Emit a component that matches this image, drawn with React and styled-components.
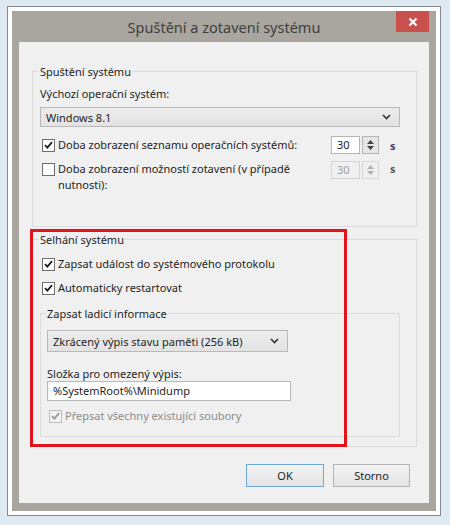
import React from "react";
import styled, { createGlobalStyle } from "styled-components";

const Global = createGlobalStyle`
  html, body { margin: 0; padding: 0; }
  body {
    background: #dfe9f2;
    font-family: "Noto Sans", "Open Sans", sans-serif;
    font-size: 11px;
    color: #1e1e1e;
  }
`;

const Frame = styled.div`
  box-sizing: border-box;
  margin: 6px 0 0 7px;
  width: 434px;
  height: 510px;
  border: 1px solid #7d8893;
  background: #ffffff;
  padding: 4px;
`;

const Window = styled.div`
  box-sizing: border-box;
  height: 100%;
  background: #a9a69f;
  padding: 0 7px 8px 7px;
  display: flex;
  flex-direction: column;
`;

const TitleBar = styled.div`
  position: relative;
  height: 31px;
  display: flex;
  align-items: center;
  justify-content: center;
  font-size: 14.5px;
  color: #3e3e3e;
  padding-top: 1px;
  box-sizing: border-box;
`;

const Close = styled.div`
  position: absolute;
  top: 0;
  right: 0;
  width: 33px;
  height: 21px;
  background: #c9504c;
  display: flex;
  align-items: center;
  justify-content: center;
`;

const Client = styled.div`
  position: relative;
  flex: 1;
  background: #f0f0f0;
  padding: 29px 12px 0 13px;
  display: flex;
  flex-direction: column;
`;

const Group = styled.div`
  border: 1px solid #dcdcdc;
  padding: 0 ${(p) => p.$pr ?? 16}px ${(p) => p.$pb}px ${(p) => p.$pl ?? 7}px;
  margin-top: ${(p) => p.$mt || 0}px;
  display: flex;
  flex-direction: column;
`;

const Legend = styled.div`
  align-self: flex-start;
  margin-top: -7px;
  margin-left: -1px;
  padding: 0 1px;
  line-height: 14px;
  height: 14px;
  background: #f0f0f0;
`;

const Label = styled.div`
  line-height: 14px;
  margin-top: ${(p) => p.$mt || 0}px;
`;

const Combo = styled.div`
  box-sizing: border-box;
  height: ${(p) => p.$h}px;
  width: ${(p) => (p.$w ? `${p.$w}px` : "auto")};
  margin-top: ${(p) => p.$mt || 0}px;
  border: 1px solid #b9b9b9;
  background: linear-gradient(#ececec, #e3e3e3);
  display: flex;
  align-items: center;
  padding: 0 8px 0 5px;
  justify-content: space-between;
`;

const Row = styled.div`
  display: flex;
  align-items: ${(p) => (p.$top ? "flex-start" : "center")};
  min-height: 18px;
  margin-top: ${(p) => p.$mt || 0}px;
  color: ${(p) => (p.$disabled ? "#8c8c8c" : "inherit")};
`;

const Box = styled.div`
  box-sizing: border-box;
  flex: none;
  width: 13px;
  height: 13px;
  margin: ${(p) => (p.$top ? "2px" : "0")} 3px 0 2px;
  border: 1px solid ${(p) => (p.$disabled ? "#bdbdbd" : "#6f6f6f")};
  background: ${(p) => (p.$disabled ? "#f2f2f2" : "#ffffff")};
  display: flex;
  align-items: center;
  justify-content: center;
`;

const RowText = styled.div`
  flex: 1;
  line-height: 16px;
`;

const SpinField = styled.div`
  box-sizing: border-box;
  width: 29px;
  height: 18px;
  border: 1px solid ${(p) => (p.$disabled ? "#d4d4d4" : "#b5b5b5")};
  background: ${(p) => (p.$disabled ? "#f0f0f0" : "#ffffff")};
  color: ${(p) => (p.$disabled ? "#a0a0a0" : "#1e1e1e")};
  padding-left: 5px;
  line-height: 16px;
`;

const SpinButtons = styled.div`
  box-sizing: border-box;
  width: 17px;
  height: 18px;
  margin-left: 2px;
  border: 1px solid ${(p) => (p.$disabled ? "#d8d8d8" : "#b5b5b5")};
  background: ${(p) => (p.$disabled ? "#f0f0f0" : "#e6e6e6")};
  display: flex;
  flex-direction: column;
  align-items: center;
  justify-content: space-around;
  padding: 2px 0;
`;

const Unit = styled.div`
  width: 6px;
  margin: 0 4px 0 11px;
  color: ${(p) => (p.$disabled ? "#555" : "#3c3c6a")};
  font-weight: bold;
`;

const Input = styled.div`
  box-sizing: border-box;
  width: 244px;
  height: 20px;
  border: 1px solid #b9b9b9;
  background: #ffffff;
  padding-left: 5px;
  line-height: 18px;
`;

const Buttons = styled.div`
  display: flex;
  justify-content: flex-end;
  gap: 9px;
  margin: 17px 7px 0 0;
`;

const Button = styled.div`
  box-sizing: border-box;
  width: ${(p) => p.$w}px;
  height: 23px;
  border: 1px solid ${(p) => (p.$default ? "#6fa8dc" : "#b3b3b3")};
  background: linear-gradient(#f2f2f2, #e4e4e4);
  display: flex;
  align-items: center;
  justify-content: center;
`;

const Highlight = styled.div`
  position: absolute;
  left: 11px;
  top: 187px;
  width: 317px;
  height: 218px;
  box-sizing: border-box;
  border: 3px solid #e3131b;
  pointer-events: none;
`;

const Check = ({ color = "#1e1e1e" }) => (
  <svg width="9" height="8" viewBox="0 0 9 8">
    <path d="M1 4.2 L3.4 6.6 L8 1.2" fill="none" stroke={color} strokeWidth="1.8" />
  </svg>
);

const Chevron = () => (
  <svg width="9" height="6" viewBox="0 0 9 6">
    <path d="M1 1 L4.5 4.5 L8 1" fill="none" stroke="#333" strokeWidth="1.6" />
  </svg>
);

const Arrows = ({ color }) => (
  <>
    <svg width="7" height="4" viewBox="0 0 7 4">
      <path d="M0 4 L3.5 0 L7 4 Z" fill={color} />
    </svg>
    <svg width="7" height="4" viewBox="0 0 7 4">
      <path d="M0 0 L3.5 4 L7 0 Z" fill={color} />
    </svg>
  </>
);

const Spinner = ({ value, disabled }) => (
  <>
    <SpinField $disabled={disabled}>{value}</SpinField>
    <SpinButtons $disabled={disabled}>
      <Arrows color={disabled ? "#b0b0b0" : "#444"} />
    </SpinButtons>
    <Unit $disabled={disabled}>s</Unit>
  </>
);

export default function App() {
  return (
    <>
      <Global />
      <Frame>
        <Window>
          <TitleBar>
            Spuštění a zotavení systému
            <Close>
              <svg width="10" height="10" viewBox="0 0 10 10">
                <path d="M1.5 1.5 L8.5 8.5 M8.5 1.5 L1.5 8.5" stroke="#fff" strokeWidth="2.2" />
              </svg>
            </Close>
          </TitleBar>
          <Client>
            <Group $pb={33}>
              <Legend>Spuštění systému</Legend>
              <Label $mt={8}>Výchozí operační systém:</Label>
              <Combo $h={20} $mt={6}>
                <span>Windows 8.1</span>
                <Chevron />
              </Combo>
              <Row $mt={9}>
                <Box>
                  <Check />
                </Box>
                <RowText>Doba zobrazení seznamu operačních systémů:</RowText>
                <Spinner value="30" />
              </Row>
              <Row $mt={7} $top>
                <Box $top />
                <RowText>
                  Doba zobrazení možností zotavení (v případě
                  <br />
                  nutnosti):
                </RowText>
                <Spinner value="30" disabled />
              </Row>
            </Group>
            <Group $mt={12} $pb={9}>
              <Legend>Selhání systému</Legend>
              <Row $mt={8}>
                <Box>
                  <Check />
                </Box>
                <RowText>Zapsat událost do systémového protokolu</RowText>
              </Row>
              <Row $mt={6}>
                <Box>
                  <Check />
                </Box>
                <RowText>Automaticky restartovat</RowText>
              </Row>
              <Group $mt={16} $pb={11} $pl={6} $pr={6}>
                <Legend>Zapsat ladicí informace</Legend>
                <Combo $h={22} $w={241} $mt={9}>
                  <span>Zkrácený výpis stavu paměti (256 kB)</span>
                  <Chevron />
                </Combo>
                <Label $mt={15}>Složka pro omezený výpis:</Label>
                <Input>%SystemRoot%\Minidump</Input>
                <Row $mt={6} $disabled>
                  <Box $disabled>
                    <Check color="#9a9a9a" />
                  </Box>
                  <RowText>Přepsat všechny existující soubory</RowText>
                </Row>
              </Group>
            </Group>
            <Buttons>
              <Button $w={78} $default>
                OK
              </Button>
              <Button $w={77}>Storno</Button>
            </Buttons>
            <Highlight />
          </Client>
        </Window>
      </Frame>
    </>
  );
}
